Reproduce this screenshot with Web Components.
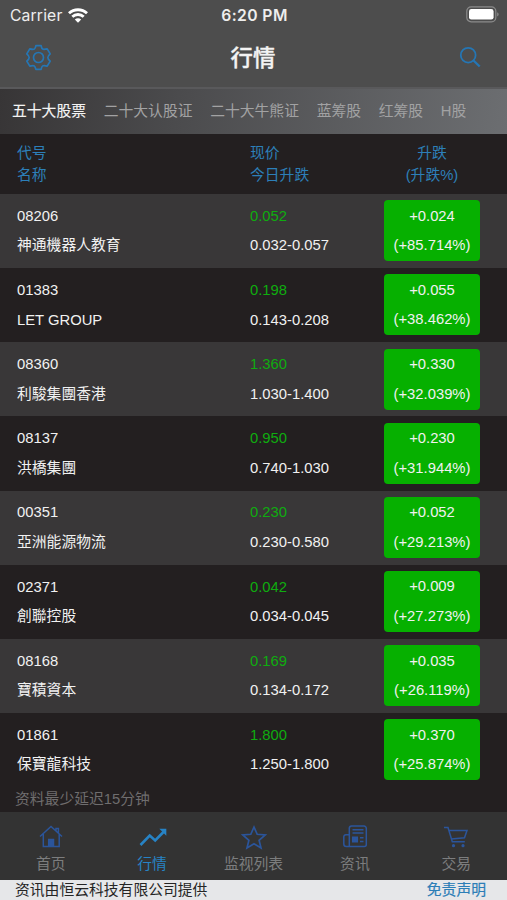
<!DOCTYPE html>
<html lang="zh-CN">
<head>
<meta charset="utf-8">
<title>行情</title>
<style>
    body {
        margin: 0;
        background: #231f20;
        font-family: "Liberation Sans", "Noto Sans CJK SC", sans-serif;
        font-size: 14.8px;
    }
</style>
</head>
<body>
<quote-app></quote-app>

<script>
class StatusBar extends HTMLElement
{
    constructor() {
        super();
        this.attachShadow({ mode: 'open' });
        this.shadowRoot.innerHTML = `
            <style>
                :host {
                    display: grid;
                    grid-template-columns: 1fr auto 1fr;
                    align-items: center;
                    height: 30px;
                    padding: 0 8px 0 10px;
                    color: #eee;
                    font-family: Inter, sans-serif;
                    font-size: 15.7px;
                }
                .carrier {
                    display: flex;
                    align-items: center;
                    gap: 6px;
                    letter-spacing: 0.15px;
                }
                .time {
                    font-weight: 600;
                    letter-spacing: 0.4px;
                }
                .battery {
                    justify-self: end;
                    margin-top: -2px;
                }
                svg {
                    display: block;
                }
            </style>
            <div class="carrier">
                <span>Carrier</span>
                <svg width="20" height="15" viewBox="0 0 20 15" fill="none" stroke="#fff" stroke-width="2.9">
                    <path d="M1 5.2C6 .6 14 .6 19 5.2"/>
                    <path d="M4.3 8.8c3.2-3 8.2-3 11.4 0"/>
                    <path d="M10 14.8 6.8 11.5c1.8-1.6 4.6-1.6 6.4 0z" fill="#fff" stroke="none"/>
                </svg>
            </div>
            <span class="time">6:20 PM</span>
            <svg class="battery" width="33" height="17" viewBox="0 0 33 17">
                <rect x=".8" y=".8" width="29" height="15" rx="4.3" fill="none" stroke="#8b8b8b" stroke-width="1.2"/>
                <rect x="3" y="3" width="24.6" height="10.6" rx="2.4" fill="#fff"/>
                <path d="M31.2 6.2c1.9.8 1.9 3.4 0 4.2z" fill="#8b8b8b"/>
            </svg>
        `;
    }
}

class NavBar extends HTMLElement
{
    constructor() {
        super();
        this.attachShadow({ mode: 'open' });
        this.shadowRoot.innerHTML = `
            <style>
                :host {
                    display: grid;
                    grid-template-columns: 1fr auto 1fr;
                    align-items: center;
                    box-sizing: border-box;
                    height: 57px;
                    padding: 0 26px 3px 25px;
                }
                h1 {
                    margin: 0;
                    padding-top: 3px;
                    color: #f3f3f3;
                    font-size: 22.4px;
                    font-weight: 500;
                    line-height: 30px;
                    -webkit-text-stroke: 0.35px;
                }
                svg {
                    display: block;
                    fill: none;
                    stroke: #2576b4;
                }
                .search {
                    justify-self: end;
                }
            </style>
            <svg width="27" height="27" viewBox="-13.5 -13.5 27 27" stroke-width="1.7" stroke-linejoin="round">
                <path d="M-2.6-11.8H2.6Q3.2-9 4.2-8.4T8.7-8.6L11.7-3.6Q9.3-1.5 9.3 0T11.7 3.6L8.7 8.6Q5.3 7.7 4.2 8.4T2.6 11.8H-2.6Q-3.2 9-4.2 8.4T-8.7 8.6L-11.7 3.6Q-9.3 1.5-9.3 0T-11.7-3.6L-8.7-8.6Q-5.3-7.7-4.2-8.4T-2.6-11.8Z"/>
                <circle r="5"/>
            </svg>
            <h1><slot></slot></h1>
            <svg class="search" width="22" height="22" viewBox="0 0 22 22" stroke-width="1.8">
                <circle cx="9.2" cy="9.2" r="7.4"/>
                <path d="m14.5 14.5 6.2 6" stroke-width="2.3"/>
            </svg>
        `;
    }
}

class MarketTabs extends HTMLElement
{
    constructor() {
        super();
        this.attachShadow({ mode: 'open' });
        this.shadowRoot.innerHTML = `
            <style>
                :host {
                    display: flex;
                    align-items: center;
                    gap: 17.7px;
                    box-sizing: border-box;
                    height: 47px;
                    padding: 0 12px 5px;
                    border-top: 2px solid #59595b;
                    background: linear-gradient(100deg, #373536, #4b4b4d 35%, #6c6e71);
                    color: #a2a2a3;
                    white-space: nowrap;
                }
                ::slotted([active]) {
                    color: #f4f4f4;
                    -webkit-text-stroke: 0.15px;
                }
            </style>
            <slot></slot>
        `;
    }
}

class QuoteHeader extends HTMLElement
{
    constructor() {
        super();
        this.attachShadow({ mode: 'open' });
        this.shadowRoot.innerHTML = `
            <style>
                :host {
                    display: grid;
                    grid-template-columns: 233px 134px 96px;
                    align-content: center;
                    box-sizing: border-box;
                    height: 60px;
                    padding-left: 17px;
                    color: #2d7fb9;
                    line-height: 22px;
                }
                .change {
                    text-align: center;
                }
            </style>
            <div>代号<br>名称</div>
            <div>现价<br>今日升跌</div>
            <div class="change">升跌<br>(升跌%)</div>
        `;
    }
}

class QuoteRow extends HTMLElement
{
    static get observedAttributes()
    {
        return ['code', 'name', 'price', 'range', 'change', 'percent'];
    }

    constructor() {
        super();
        this.attachShadow({ mode: 'open' });
        this.shadowRoot.innerHTML = `
            <style>
                :host {
                    display: grid;
                    grid-template-columns: 233px 134px 96px;
                    align-items: center;
                    box-sizing: border-box;
                    height: 74.15px;
                    padding-left: 17px;
                    background: var(--row-color, #231f20);
                    color: #f1f1f1;
                    line-height: 29.6px;
                }
                .cell {
                    padding-top: 0.8px;
                }
                .name {
                    font-family: "Liberation Sans", "Noto Sans CJK TC", sans-serif;
                }
                .price {
                    color: #0fac0f;
                }
                .badge {
                    box-sizing: border-box;
                    height: 61px;
                    margin-top: -0.5px;
                    padding-top: 1.4px;
                    border-radius: 4px;
                    background: #06b000;
                    text-align: center;
                }
            </style>
            <div class="cell">
                <div data-field="code"></div>
                <div data-field="name" class="name"></div>
            </div>
            <div class="cell">
                <div data-field="price" class="price"></div>
                <div data-field="range"></div>
            </div>
            <div class="badge">
                <div data-field="change"></div>
                <div data-field="percent"></div>
            </div>
        `;
    }

    attributeChangedCallback(name, oldValue, newValue)
    {
        this.shadowRoot.querySelector(`[data-field="${name}"]`).textContent = newValue;
    }
}

const ICONS = {
    home: `<path d="m2 12.5 11-10 11 10M5.3 10v12.5h15.9V10M18 6.5v-2h2.4V9"/><path d="M10.7 22v-6.5h4.8V22z" fill="currentColor"/>`,
    trend: `<path d="m1.5 21 9.2-9.5 5.5 5L25 7.500" stroke-width="2.6"/><path d="M20.300 4.800h7v7z" fill="currentColor" stroke="none"/>`,
    star: `<path d="m13 3 3.2 7.3 8 .7-6.1 5.3L20 24l-7-4.200L6 24l1.900-7.700L1.800 11l8-.7z" stroke-width="1.7"/>`,
    news: `<path d="M7.3 22.5V4.3A2.3 2.3 0 0 1 9.6 2H22a2.3 2.3 0 0 1 2.3 2.3v16.2a2 2 0 0 1-2 2h-18A2.5 2.5 0 0 1 1.8 20v-7.2a2 2 0 0 1 2-2h3.5M10.5 5.8h11M10.5 9h11M18 13.8h3.5M18 17.5h3.5"/><path d="M10.7 13.2h4.6v4.6h-4.6z" fill="currentColor"/>`,
    cart: `<path d="M1 3.5h4l4.300 14.200h12.500M6 6.500h18l-2.500 7.300L8.300 15"/><circle cx="10.5" cy="21.7" r="1.6" fill="currentColor" stroke="none"/><circle cx="20" cy="21.7" r="1.6" fill="currentColor" stroke="none"/>`
};

class TabItem extends HTMLElement
{
    constructor() {
        super();
        this.attachShadow({ mode: 'open' });
    }

    connectedCallback()
    {
        this.shadowRoot.innerHTML = `
            <style>
                :host {
                    display: flex;
                    flex: 1;
                    flex-direction: column;
                    align-items: center;
                    color: #7c7d7e;
                    line-height: 22px;
                }
                svg {
                    color: #2b559b;
                    fill: none;
                    stroke: currentColor;
                    stroke-width: 1.5;
                    margin-bottom: 3px;
                }
                :host([active]), :host([active]) svg {
                    color: #2783c5;
                }
            </style>
            <svg width="26" height="26" viewBox="0 0 26 26" overflow="visible">${ICONS[this.getAttribute('icon')]}</svg>
            <span><slot></slot></span>
        `;
    }
}

class TabBar extends HTMLElement
{
    constructor() {
        super();
        this.attachShadow({ mode: 'open' });
        this.shadowRoot.innerHTML = `
            <style>
                :host {
                    display: flex;
                    box-sizing: border-box;
                    height: 68px;
                    padding-top: 12px;
                    background: #333;
                }
            </style>
            <slot></slot>
        `;
    }
}

const QUOTES = [
    ['08206', '神通機器人教育', '0.052', '0.032-0.057', '+0.024', '(+85.714%)'],
    ['01383', 'LET GROUP', '0.198', '0.143-0.208', '+0.055', '(+38.462%)'],
    ['08360', '利駿集團香港', '1.360', '1.030-1.400', '+0.330', '(+32.039%)'],
    ['08137', '洪橋集團', '0.950', '0.740-1.030', '+0.230', '(+31.944%)'],
    ['00351', '亞洲能源物流', '0.230', '0.230-0.580', '+0.052', '(+29.213%)'],
    ['02371', '創聯控股', '0.042', '0.034-0.045', '+0.009', '(+27.273%)'],
    ['08168', '寶積資本', '0.169', '0.134-0.172', '+0.035', '(+26.119%)'],
    ['01861', '保寶龍科技', '1.800', '1.250-1.800', '+0.370', '(+25.874%)']
];

class QuoteApp extends HTMLElement
{
    constructor() {
        super();
        this.attachShadow({ mode: 'open' });
        this.shadowRoot.innerHTML = `
            <style>
                :host {
                    display: flex;
                    flex-direction: column;
                    height: 900px;
                    overflow: hidden;
                }
                .top {
                    background: #4d4d4d;
                }
                quote-row:nth-child(odd) {
                    --row-color: #393738;
                }
                .delay {
                    flex: 1;
                    padding: 1px 0 0 15px;
                    color: #6f6d6e;
                    line-height: 22px;
                }
                footer {
                    display: flex;
                    justify-content: space-between;
                    height: 20px;
                    padding: 0 21px 0 15px;
                    background: #e6e7e9;
                    color: #252525;
                    line-height: 21px;
                }
                footer a {
                    color: #2c7eb7;
                    -webkit-text-stroke: 0.2px;
                }
            </style>
            <div class="top">
                <status-bar></status-bar>
                <nav-bar>行情</nav-bar>
            </div>
            <market-tabs>
                <span active>五十大股票</span>
                <span>二十大认股证</span>
                <span>二十大牛熊证</span>
                <span>蓝筹股</span>
                <span>红筹股</span>
                <span>H股</span>
            </market-tabs>
            <quote-header></quote-header>
            <div class="list"></div>
            <div class="delay">资料最少延迟15分钟</div>
            <tab-bar>
                <tab-item icon="home">首页</tab-item>
                <tab-item icon="trend" active>行情</tab-item>
                <tab-item icon="star">监视列表</tab-item>
                <tab-item icon="news">资讯</tab-item>
                <tab-item icon="cart">交易</tab-item>
            </tab-bar>
            <footer><span>资讯由恒云科技有限公司提供</span><a>免责声明</a></footer>
        `;
        this.renderRows();
    }

    renderRows()
    {
        const list = this.shadowRoot.querySelector('.list');
        for (const quote of QUOTES)
        {
            const row = document.createElement('quote-row');
            QuoteRow.observedAttributes.forEach((key, i) => row.setAttribute(key, quote[i]));
            list.appendChild(row);
        }
    }
}

customElements.define('status-bar', StatusBar);
customElements.define('nav-bar', NavBar);
customElements.define('market-tabs', MarketTabs);
customElements.define('quote-header', QuoteHeader);
customElements.define('quote-row', QuoteRow);
customElements.define('tab-item', TabItem);
customElements.define('tab-bar', TabBar);
customElements.define('quote-app', QuoteApp);
</script>
</body>
</html>
